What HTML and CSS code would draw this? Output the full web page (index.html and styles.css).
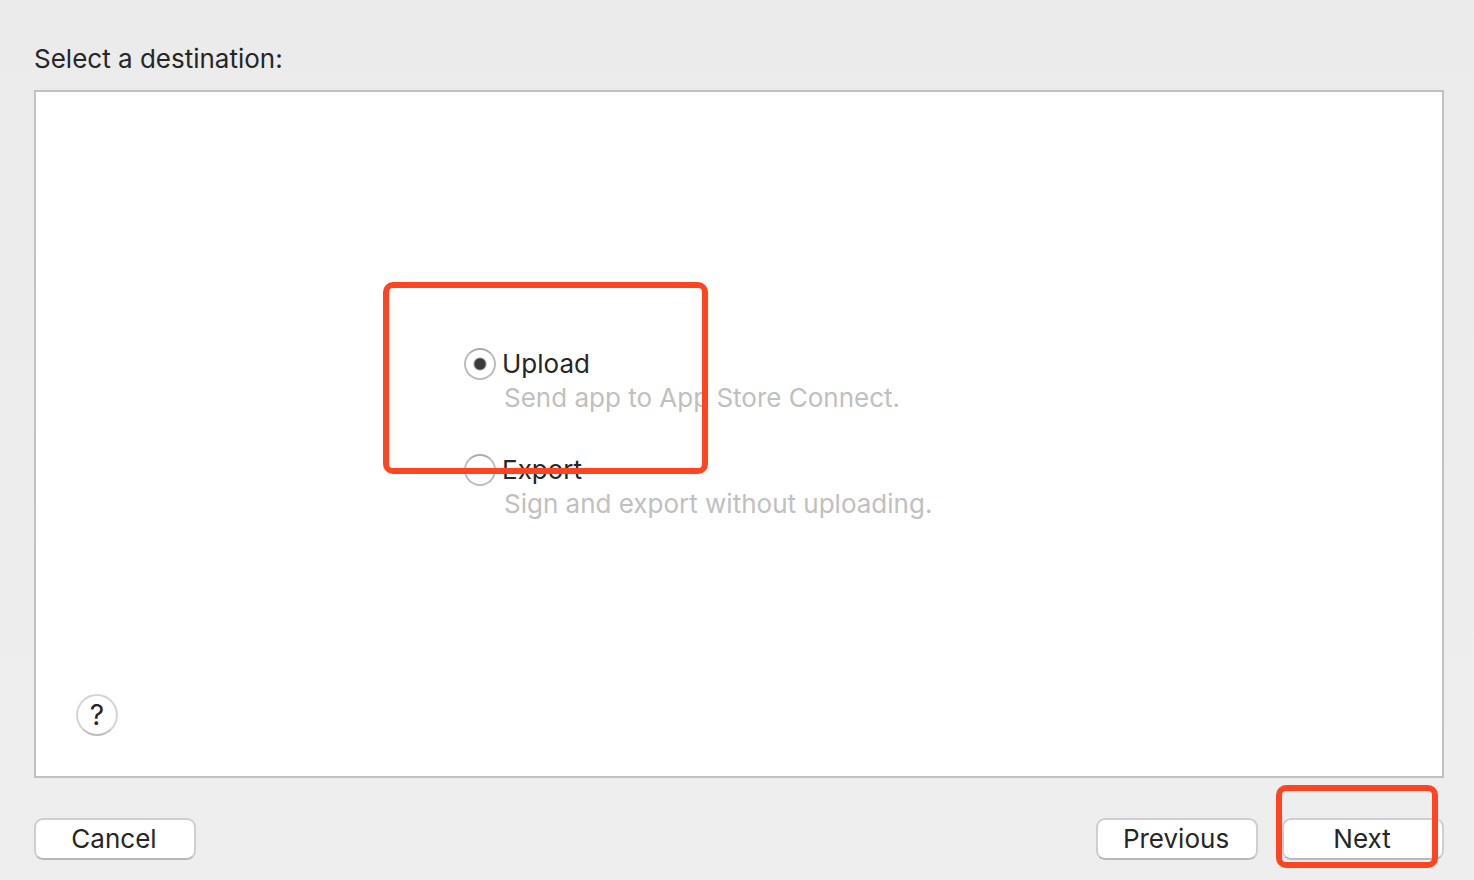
FILE: index.html
```
<!DOCTYPE html>
<html lang="en">
<head>
<meta charset="utf-8">
<title>Select a destination</title>
<link rel="stylesheet" href="styles.css">
</head>
<body>
<form class="dialog">
  <h1 class="title" id="title">Select a destination:</h1>
  <main class="panel">
    <div class="options" role="radiogroup" aria-labelledby="title">
      <div class="option">
        <input class="radio" type="radio" name="destination" id="upload" aria-describedby="upload-note" checked>
        <label class="name" for="upload">Upload</label>
        <p class="note" id="upload-note">Send app to App Store Connect.</p>
      </div>
      <div class="option">
        <input class="radio" type="radio" name="destination" id="export" aria-describedby="export-note">
        <label class="name" for="export">Export</label>
        <p class="note" id="export-note">Sign and export without uploading.</p>
      </div>
      <span class="mark mark-upload"></span>
    </div>
    <button class="help" type="button" aria-label="Help">?</button>
  </main>
  <footer class="actions">
    <button class="button" type="button">Cancel</button>
    <div class="steps">
      <button class="button" type="button">Previous</button>
      <div class="next">
        <button class="button" type="button">Next</button>
        <span class="mark mark-next"></span>
      </div>
    </div>
  </footer>
</form>
</body>
</html>
```
FILE: styles.css
```
* {
  box-sizing: border-box;
}

body {
  margin: 0;
  background: linear-gradient(#ebebeb, #eeeeee);
  color: #262626;
  font: 400 26px/34px Inter, "Liberation Sans", sans-serif;
}

.dialog {
  display: flex;
  flex-direction: column;
  min-height: 100vh;
  padding: 42px 30px 20px 34px;
}

.title {
  margin: 0 0 14px;
  font: inherit;
}

.panel {
  flex: 1;
  display: grid;
  grid-template-rows: 1fr auto 1fr;
  justify-items: center;
  padding: 0 40px;
  background: #fff;
  border: 2px solid #c1c1c1;
}

.options {
  position: relative;
  grid-row: 2;
  display: flex;
  flex-direction: column;
  gap: 38px;
  width: 100%;
  max-width: 550px;
}

.option {
  display: grid;
  grid-template-columns: 32px 1fr;
  column-gap: 6px;
  align-items: center;
}

.radio {
  appearance: none;
  width: 32px;
  height: 32px;
  margin: 0;
  border: 2px solid #bcbcbc;
  border-top-color: #acacac;
  border-radius: 50%;
  background: #fff;
}

.radio:checked {
  background: radial-gradient(circle, #3a3a3a 5px, #fff 7px);
}

.note {
  grid-column: 2;
  margin: 0;
  padding-left: 2px;
  color: #c0c0c0;
}

.help {
  grid-row: 3;
  place-self: end start;
  width: 42px;
  height: 42px;
  margin-bottom: 40px;
  padding: 0;
  border: 2px solid #d4d4d4;
  border-bottom-color: #c0c0c0;
  border-radius: 50%;
  background: #fff;
  color: inherit;
  font: inherit;
  font-size: 28px;
}

.actions,
.steps {
  display: flex;
  justify-content: space-between;
}

.actions {
  padding-top: 40px;
}

.steps {
  gap: 24px;
}

.next {
  position: relative;
}

.button {
  width: 162px;
  height: 42px;
  padding: 0 2px 0 0;
  border: 2px solid #cfcfcf;
  border-bottom-color: #b8b8b8;
  border-radius: 9px;
  background: #fff;
  color: inherit;
  font: inherit;
}

.mark {
  position: absolute;
  border: 6px solid #ff4422;
  border-radius: 10px;
  pointer-events: none;
}

.mark-upload {
  top: -65px;
  left: -81px;
  width: 325px;
  height: 192px;
}

.mark-next {
  top: -33px;
  left: -6px;
  width: 162px;
  height: 83px;
}
```
